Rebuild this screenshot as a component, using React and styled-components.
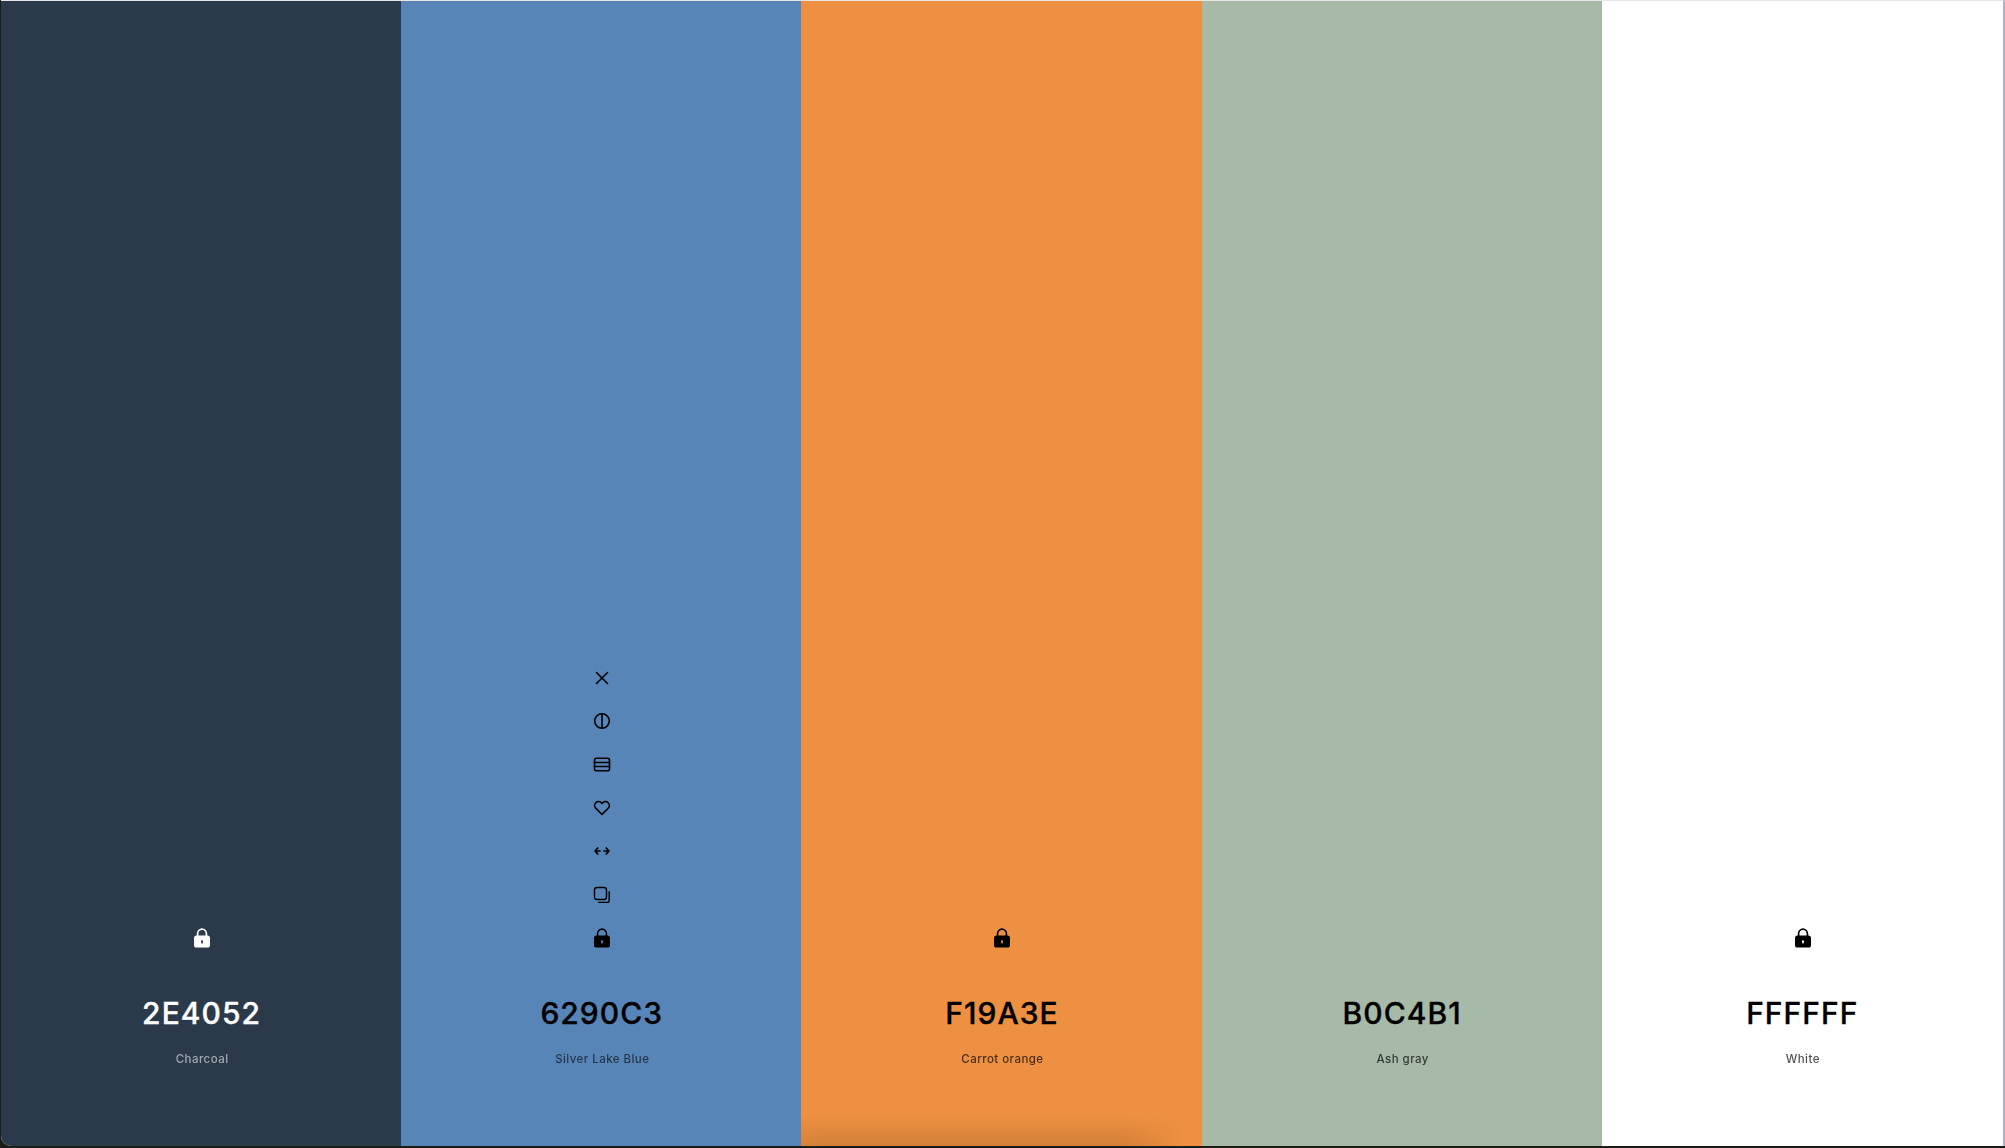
import React from "react";
import styled, { createGlobalStyle } from "styled-components";

const Global = createGlobalStyle`
  html, body { margin: 0; padding: 0; height: 100%; background: #1a1a14; overflow: hidden; }
  #root { height: 100%; }
`;

const Frame = styled.div`
  width: 2005px;
  height: 1148px;
  box-sizing: border-box;
  padding: 0 0 2px 1px;
  background: #1d1d18;
`;

const Palette = styled.main`
  display: grid;
  grid-template-columns: repeat(5, 400.2px);
  box-sizing: border-box;
  height: 100%;
  border-top: 1px solid #e6e6e6;
  border-right: 2px solid #b3aecb;
  border-bottom-left-radius: 10px;
  overflow: hidden;
  background: #fff;
`;

const Swatch = styled.section`
  display: flex;
  flex-direction: column;
  align-items: center;
  justify-content: flex-end;
  padding: 0 0 79px 2px;
  background: ${(p) => p.$bg};
  color: ${(p) => p.$fg};
  font-family: Inter, "Liberation Sans", sans-serif;
  position: relative;
`;

const Glow = styled.div`
  position: absolute;
  left: 0;
  right: 0;
  bottom: 0;
  height: 30px;
  background: linear-gradient(180deg, rgba(150, 90, 30, 0) 0, rgba(150, 90, 30, 0.3) 100%);
  -webkit-mask-image: linear-gradient(90deg, rgba(0, 0, 0, 0.8) 0, #000 6%, #000 80%, transparent 95%);
  mask-image: linear-gradient(90deg, rgba(0, 0, 0, 0.8) 0, #000 6%, #000 80%, transparent 95%);
  pointer-events: none;
`;

const Tools = styled.div`
  display: flex;
  flex-direction: column;
  align-items: center;
  gap: 23.4px;
`;

const ToolSlot = styled.span`
  display: flex;
  align-items: center;
  justify-content: center;
  width: 20px;
  height: 20px;
  visibility: ${(p) => (p.$hidden ? "hidden" : "visible")};
`;

const Hex = styled.div`
  margin: 47px 1px 0 0;
  font-size: 30px;
  line-height: 36px;
  font-weight: 500;
  letter-spacing: 1.05px;
  -webkit-text-stroke: 0.35px currentColor;
`;

const Name = styled.div`
  margin-top: 20px;
  font-size: 11.5px;
  line-height: 16px;
  font-weight: 500;
  letter-spacing: 0.45px;
  opacity: ${(p) => p.$soft};
`;

const Svg = ({ children, size = 20, sw = 1.6 }) => (
  <svg width={size} height={size} viewBox="0 0 20 20" fill="none" stroke="currentColor" strokeWidth={sw} strokeLinecap="round" strokeLinejoin="round">
    {children}
  </svg>
);

const Close = () => <Svg><path d="M4.5 4.5l11 11M15.5 4.5l-11 11" /></Svg>;
const Contrast = () => <Svg><circle cx="10" cy="10" r="7.3" /><path d="M10 2.7v14.6" /></Svg>;
const Rows = () => <Svg><rect x="2.5" y="4.2" width="15" height="12.6" rx="2" /><path d="M2.5 8.5h15M2.5 12.5h15" /></Svg>;
const Heart = () => <Svg><path d="M10 16.4L3.8 10.3a4 4 0 0 1 0-5.6 3.9 3.9 0 0 1 5.5 0l.7.7.7-.7a3.9 3.9 0 0 1 5.5 0 4 4 0 0 1 0 5.6z" /></Svg>;
const Resize = () => (
  <Svg sw={1.7}>
    <path d="M5.8 7L3 10l2.8 3M14.2 7L17 10l-2.8 3M3.2 10H8M12 10h4.8" />
  </Svg>
);
const Copy = () => (
  <Svg sw={1.4}>
    <rect x="2.5" y="2.5" width="12" height="12" rx="2.4" />
    <path d="M17.2 6.8v8.4a2.2 2.2 0 0 1-2.2 2.2H6.8" />
  </Svg>
);
const Lock = ({ $hole }) => (
  <svg width="20" height="20" viewBox="0 0 20 20">
    <path d="M5.6 8V5.6a4.4 4.4 0 0 1 8.8 0V8" fill="none" stroke="currentColor" strokeWidth="1.7" />
    <rect x="2" y="7.5" width="16" height="12" rx="2.6" fill="currentColor" />
    <circle cx="10" cy="13.4" r="1.1" fill={$hole} />
    <rect x="9.4" y="13.4" width="1.2" height="2.2" fill={$hole} />
  </svg>
);

const swatches = [
  { hex: "2E4052", name: "Charcoal", bg: "#2a3a4a", fg: "#fff", soft: 0.55 },
  { hex: "6290C3", name: "Silver Lake Blue", bg: "#5885b8", fg: "#000", soft: 0.6, tools: true },
  { hex: "F19A3E", name: "Carrot orange", bg: "#ed9042", fg: "#000", soft: 0.7, glow: true },
  { hex: "B0C4B1", name: "Ash gray", bg: "#a7baa8", fg: "#000", soft: 0.7, noLock: true },
  { hex: "FFFFFF", name: "White", bg: "#ffffff", fg: "#000", soft: 0.7 },
];

const toolIcons = [Close, Contrast, Rows, Heart, Resize, Copy];

export default function App() {
  return (
    <>
      <Global />
      <Frame>
        <Palette>
          {swatches.map((s) => (
            <Swatch key={s.hex} $bg={s.bg} $fg={s.fg}>
              <Tools>
                {s.tools && toolIcons.map((Icon, i) => (
                  <ToolSlot key={i}><Icon /></ToolSlot>
                ))}
                <ToolSlot $hidden={s.noLock}>
                  <Lock $hole={s.bg} />
                </ToolSlot>
              </Tools>
              <Hex>{s.hex}</Hex>
              <Name $soft={s.soft}>{s.name}</Name>
              {s.glow && <Glow />}
            </Swatch>
          ))}
        </Palette>
      </Frame>
    </>
  );
}
